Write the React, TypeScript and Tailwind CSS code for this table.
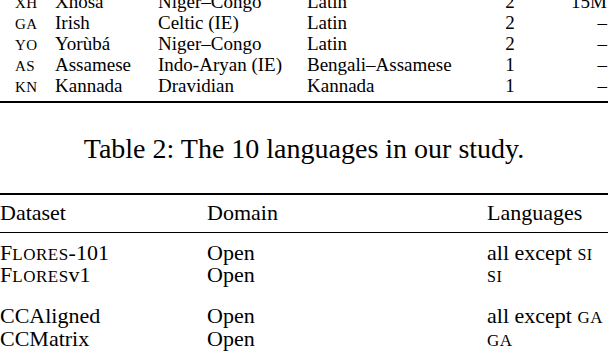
import React from "react";

const langs: [string, string, string, string, string, string][] = [
  ["xh", "Xhosa", "Niger–Congo", "Latin", "2", "15M"],
  ["ga", "Irish", "Celtic (IE)", "Latin", "2", "–"],
  ["yo", "Yorùbá", "Niger–Congo", "Latin", "2", "–"],
  ["as", "Assamese", "Indo-Aryan (IE)", "Bengali–Assamese", "1", "–"],
  ["kn", "Kannada", "Dravidian", "Kannada", "1", "–"],
];

export default function App() {
  return (
    <div
      className="w-[608px] h-[352px] overflow-hidden bg-white text-black"
      style={{ fontFamily: '"Liberation Serif", "Times New Roman", serif' }}
    >
      <div className="mt-[-9px] text-[19px] leading-[21px]">
        {langs.map((r) => (
          <div key={r[0]} className="flex h-[21px] whitespace-nowrap">
            <div className="w-[55px] pl-[15px]">
              <span className="uppercase text-[15px] leading-none tracking-[0.5px]">{r[0]}</span>
            </div>
            <div className="w-[103px]">{r[1]}</div>
            <div className="w-[149px]">{r[2]}</div>
            <div className="w-[183px]">{r[3]}</div>
            <div className="w-[40px] text-center">{r[4]}</div>
            <div className="flex-1 text-right pr-[1px]">{r[5]}</div>
          </div>
        ))}
      </div>
      <div className="mt-[5px] h-[2px] bg-black" />
      <div className="mt-[30px] text-center text-[28px] leading-[32px]">
        Table 2: The 10 languages in our study.
      </div>
      <div className="mt-[28px] h-[2px] bg-black" />
      <div className="text-[22px] leading-[22px]">
        <div className="mt-[7px] flex h-[22px] whitespace-nowrap">
          <div className="w-[207px]">Dataset</div>
          <div className="w-[280px]">Domain</div>
          <div className="flex-1">Languages</div>
        </div>
        <div className="mt-[8px] h-[1px] bg-black" />
        <div className="mt-[9px] flex h-[22px] whitespace-nowrap">
          <div className="w-[207px]">
            F<span className="uppercase text-[17px] leading-none tracking-[0.5px]">lores</span>-101
          </div>
          <div className="w-[280px]">Open</div>
          <div className="flex-1">
            all except <span className="uppercase text-[16px] leading-none tracking-[0.5px]">si</span>
          </div>
        </div>
        <div className="flex h-[22px] whitespace-nowrap">
          <div className="w-[207px]">
            F<span className="uppercase text-[17px] leading-none tracking-[0.5px]">lores</span>v1
          </div>
          <div className="w-[280px]">Open</div>
          <div className="flex-1">
            <span className="uppercase text-[16px] leading-none tracking-[0.5px]">si</span>
          </div>
        </div>
        <div className="mt-[19px] flex h-[22px] whitespace-nowrap">
          <div className="w-[207px]">CCAligned</div>
          <div className="w-[280px]">Open</div>
          <div className="flex-1">
            all except <span className="uppercase text-[17px] leading-none tracking-[0.5px]">ga</span>
          </div>
        </div>
        <div className="mt-[1px] flex h-[22px] whitespace-nowrap">
          <div className="w-[207px]">CCMatrix</div>
          <div className="w-[280px]">Open</div>
          <div className="flex-1">
            <span className="uppercase text-[17px] leading-none tracking-[0.5px]">ga</span>
          </div>
        </div>
      </div>
    </div>
  );
}
